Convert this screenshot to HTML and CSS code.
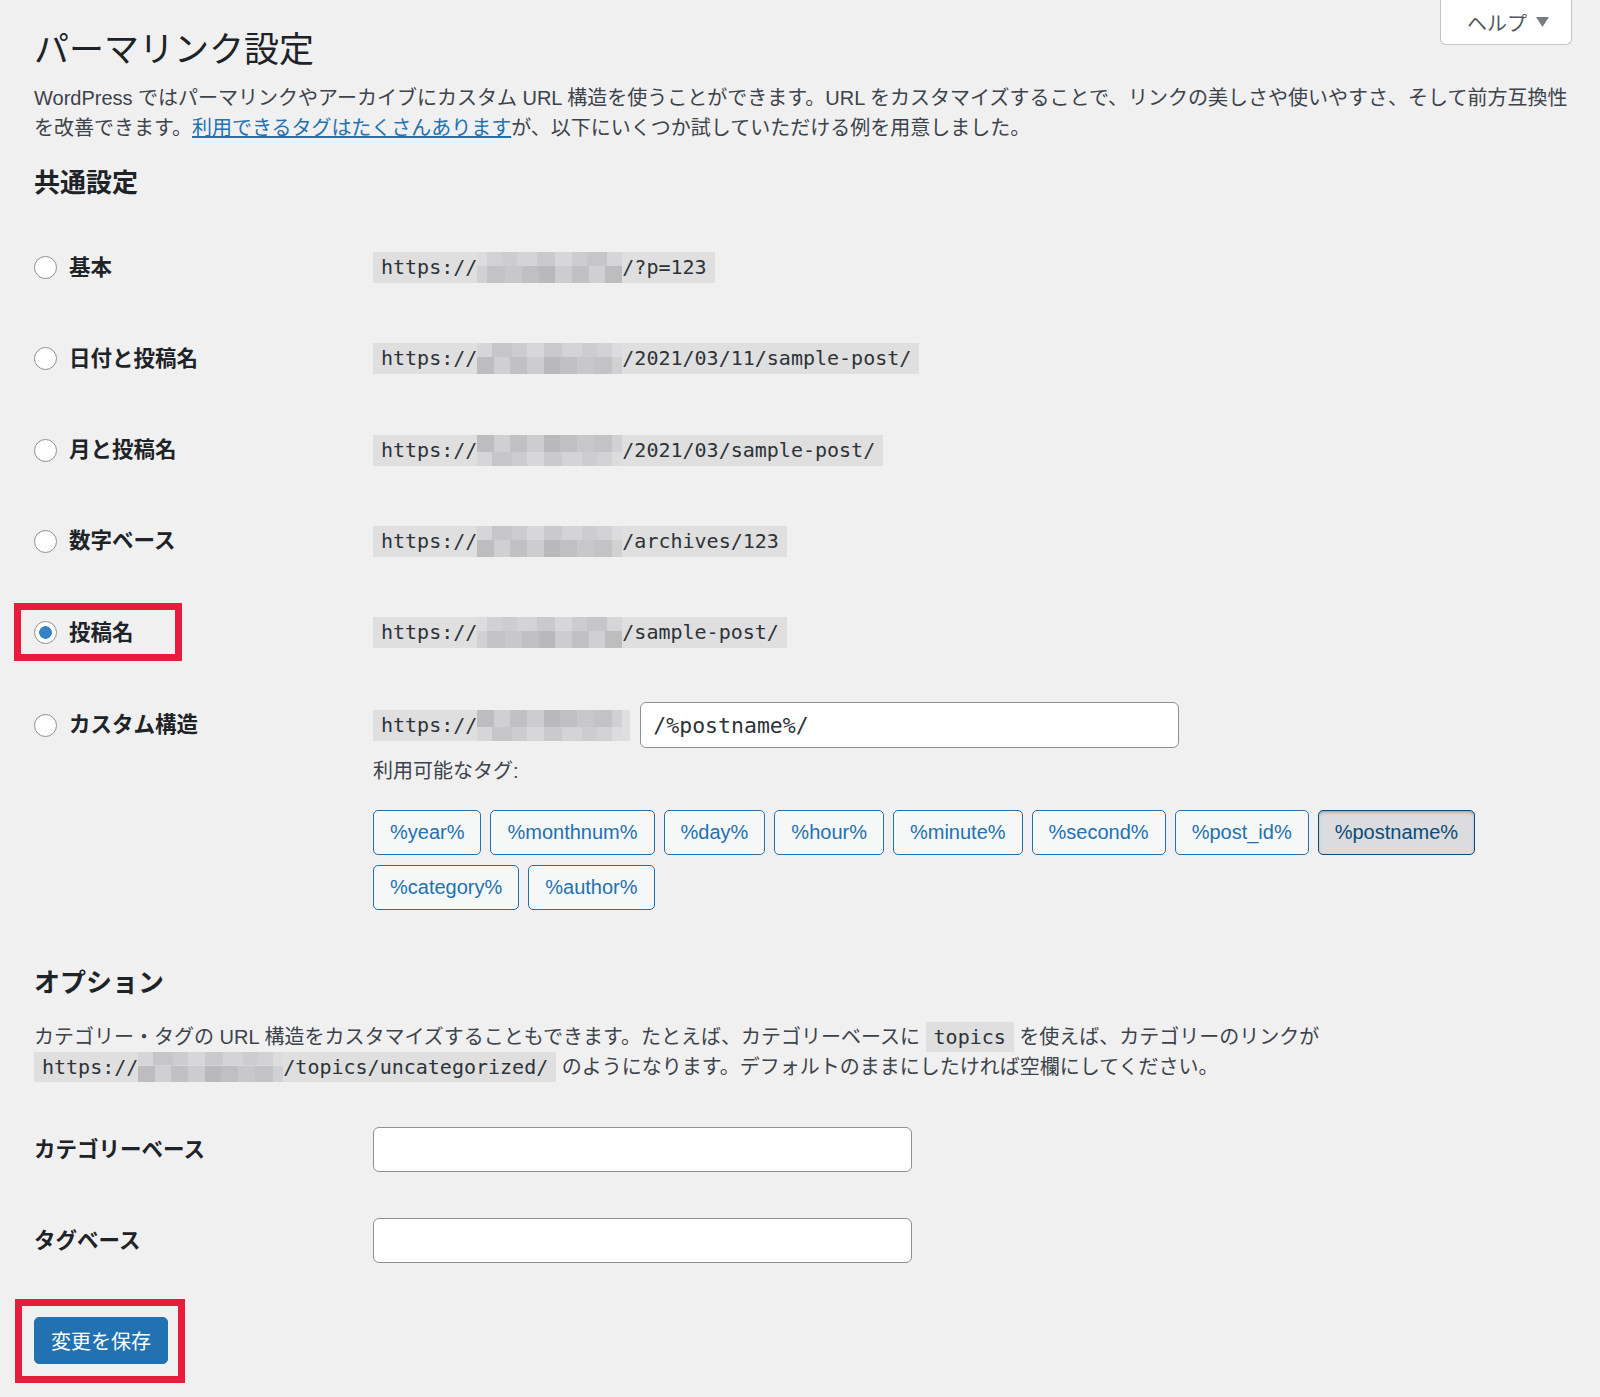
FILE: index.html
```html
<!DOCTYPE html>
<html lang="ja">
<head>
  <meta charset="UTF-8" />
  <meta name="viewport" content="width=device-width, initial-scale=1.0" />
  <title>パーマリンク設定</title>
  <link rel="stylesheet" href="styles.css">
</head>
<body>
  <div class="wrap">
    <button class="help-tab" type="button">ヘルプ
      <svg width="13" height="10" viewBox="0 0 13 10"><path d="M0 0h13L6.5 10z" fill="#787c82"/></svg>
    </button>

    <h1>パーマリンク設定</h1>
    <p class="intro">WordPress ではパーマリンクやアーカイブにカスタム URL 構造を使うことができます。URL をカスタマイズすることで、リンクの美しさや使いやすさ、そして前方互換性を改善できます。<a href="#">利用できるタグはたくさんあります</a>が、以下にいくつか試していただける例を用意しました。</p>

    <h2>共通設定</h2>
    <div class="form-table">
      <div class="row">
        <label class="th"><input type="radio" name="selection">基本</label>
        <div class="td"><code class="code">https://<span class="mask"></span>/?p=123</code></div>
      </div>
      <div class="row">
        <label class="th"><input type="radio" name="selection">日付と投稿名</label>
        <div class="td"><code class="code">https://<span class="mask m2"></span>/2021/03/11/sample-post/</code></div>
      </div>
      <div class="row">
        <label class="th"><input type="radio" name="selection">月と投稿名</label>
        <div class="td"><code class="code">https://<span class="mask m3"></span>/2021/03/sample-post/</code></div>
      </div>
      <div class="row">
        <label class="th"><input type="radio" name="selection">数字ベース</label>
        <div class="td"><code class="code">https://<span class="mask m2"></span>/archives/123</code></div>
      </div>
      <div class="row">
        <label class="th"><input type="radio" name="selection" checked>投稿名<span class="mark mark-radio"></span></label>
        <div class="td"><code class="code">https://<span class="mask"></span>/sample-post/</code></div>
      </div>
      <div class="row custom">
        <label class="th"><input type="radio" name="selection">カスタム構造</label>
        <div class="td">
          <div class="custom-line">
            <code class="code">https://<span class="mask m3"></span></code>
            <input class="structure" type="text" value="/%postname%/">
          </div>
          <p class="tags-label">利用可能なタグ:</p>
          <div class="tags">
            <button class="tag" type="button">%year%</button>
            <button class="tag" type="button">%monthnum%</button>
            <button class="tag" type="button">%day%</button>
            <button class="tag" type="button">%hour%</button>
            <button class="tag" type="button">%minute%</button>
            <button class="tag" type="button">%second%</button>
            <button class="tag" type="button">%post_id%</button>
            <button class="tag active" type="button">%postname%</button>
            <button class="tag" type="button">%category%</button>
            <button class="tag" type="button">%author%</button>
          </div>
        </div>
      </div>
    </div>

    <h2 class="options-title">オプション</h2>
    <p class="options-text">カテゴリー・タグの URL 構造をカスタマイズすることもできます。たとえば、カテゴリーベースに <code class="code inline">topics</code> を使えば、カテゴリーのリンクが <code class="code inline">https://<span class="mask m2"></span>/topics/uncategorized/</code> のようになります。デフォルトのままにしたければ空欄にしてください。</p>

    <div class="form-table options">
      <div class="row opt">
        <label class="th" for="category_base">カテゴリーベース</label>
        <div class="td"><input id="category_base" class="regular-text" type="text"></div>
      </div>
      <div class="row opt">
        <label class="th" for="tag_base">タグベース</label>
        <div class="td"><input id="tag_base" class="regular-text" type="text"></div>
      </div>
    </div>

    <div class="submit">
      <div class="save-wrap">
        <button class="button-primary" type="button">変更を保存</button>
        <span class="mark mark-save"></span>
      </div>
    </div>
  </div>
</body>
</html>
```

FILE: styles.css
```css
html {
  background: #f0f0f1;
}
body {
  margin: 0;
  background: #f0f0f1;
  color: #3c434a;
  font-family: "Liberation Sans", "Noto Sans CJK JP", sans-serif;
  font-size: 20px;
  line-height: 30px;
}
.wrap {
  position: relative;
  padding: 27px 31px 20px 34px;
}

/* help tab at the top right */
.help-tab {
  position: absolute;
  top: 0;
  right: 28px;
  width: 132px;
  height: 45px;
  padding: 0 0 0 26px;
  display: flex;
  align-items: center;
  gap: 9px;
  background: #fff;
  border: 1px solid #c3c4c7;
  border-top: none;
  border-radius: 0 0 6px 6px;
  color: #50575e;
  font-family: inherit;
  font-size: 20px;
}

h1 {
  margin: 0;
  font-size: 35px;
  font-weight: 400;
  line-height: 46px;
  color: #1d2327;
}
.intro {
  margin: 10px 0 0;
}
a {
  color: #2271b1;
  text-decoration: underline;
}
h2 {
  margin: 23px 0 0;
  font-size: 26px;
  line-height: 34px;
  font-weight: 700;
  color: #1d2327;
}

/* form rows */
.form-table {
  margin-top: 22px;
}
.row {
  display: grid;
  grid-template-columns: 339px 1fr;
  align-items: start;
  padding: 30px 0 30.3px;
}
.th {
  position: relative;
  display: flex;
  align-items: center;
  gap: 12px;
  height: 31px;
  color: #1d2327;
  font-size: 21.5px;
  font-weight: 700;
}
.row.custom {
  padding: 24px 0 31px;
}
.row.custom .th {
  height: 46px;
}
.row.opt {
  padding: 23px 0;
}
.row.opt .th {
  height: 45px;
}

input[type="radio"] {
  appearance: none;
  -webkit-appearance: none;
  margin: 0;
  width: 23px;
  height: 23px;
  flex: none;
  border: 1px solid #8c8f94;
  border-radius: 50%;
  background: #fff;
}
input[type="radio"]:checked {
  background: radial-gradient(circle, #3582c4 0 6px, #fff 6.6px);
}

/* code samples */
.code {
  display: inline-flex;
  align-items: stretch;
  height: 31px;
  padding: 0 8px;
  background: #dfdfe0;
  color: #2c3338;
  font-family: "DejaVu Sans Mono", monospace;
  font-size: 20px;
  line-height: 31px;
  white-space: nowrap;
}
.code.inline {
  height: 30px;
  line-height: 30px;
  vertical-align: top;
}
.mask {
  display: block;
  width: 145px;
  background:
    linear-gradient(90deg, #dcdcde 0 10px, #d2d2d4 10px 25px, #cdcdcf 25px 40px, #d4d4d6 40px 60px, #cacacc 60px 78px, #d7d7d9 78px 95px, #cdcdcf 95px 110px, #c6c6c8 110px 130px, #d6d6d8 130px) top / 100% 45% no-repeat,
    linear-gradient(90deg, #d1d1d3 0 10px, #c3c3c5 10px 28px, #c8c8ca 28px 45px, #c0c0c2 45px 62px, #b9b9bb 62px 78px, #cdcdcf 78px 95px, #c1c1c3 95px 112px, #d0d0d2 112px 128px, #bdbdbf 128px) bottom / 100% 55% no-repeat;
}
.mask.m2 {
  transform: scaleX(-1);
}
.mask.m3 {
  transform: scale(-1, -1);
}

/* custom structure */
.custom-line {
  display: flex;
  align-items: center;
  gap: 10px;
  height: 46px;
}
.structure {
  box-sizing: border-box;
  width: 539px;
  height: 46px;
  padding: 0 12px;
  border: 1px solid #8c8f94;
  border-radius: 6px;
  background: #fff;
  color: #2c3338;
  font-family: "DejaVu Sans Mono", monospace;
  font-size: 21.5px;
}
.tags-label {
  margin: 8px 0 0;
}
.tags {
  display: flex;
  flex-wrap: wrap;
  gap: 10px 9px;
  margin-top: 24px;
}
.tag {
  height: 45px;
  padding: 0 16px;
  border: 1px solid #2271b1;
  border-radius: 5px;
  background: #f6f7f7;
  color: #2271b1;
  font-family: inherit;
  font-size: 20px;
}
.tag.active {
  background: #dcdcde;
  border-color: #0a4b78;
  color: #0a4b78;
  box-shadow: inset 0 2px 5px -3px #0a4b78;
}

/* options */
.options-title {
  margin-top: 25px;
}
.options-text {
  margin: 22px 0 0;
}
.regular-text {
  box-sizing: border-box;
  width: 539px;
  height: 45px;
  border: 1px solid #8c8f94;
  border-radius: 6px;
  background: #fff;
}

.submit {
  display: flex;
  margin-top: 31px;
}
.save-wrap {
  position: relative;
}
.button-primary {
  display: block;
  height: 47px;
  padding: 0 16px;
  border: 1px solid #2271b1;
  border-radius: 5px;
  background: #2271b1;
  color: #fff;
  font-family: inherit;
  font-size: 20px;
}

/* red annotation frames */
.mark {
  position: absolute;
  box-sizing: border-box;
  border: 7px solid #e81c3c;
  pointer-events: none;
}
.mark-radio {
  left: -20px;
  top: -14px;
  width: 168px;
  height: 58px;
}
.mark-save {
  left: -19px;
  top: -18px;
  width: 170px;
  height: 84px;
}
```
